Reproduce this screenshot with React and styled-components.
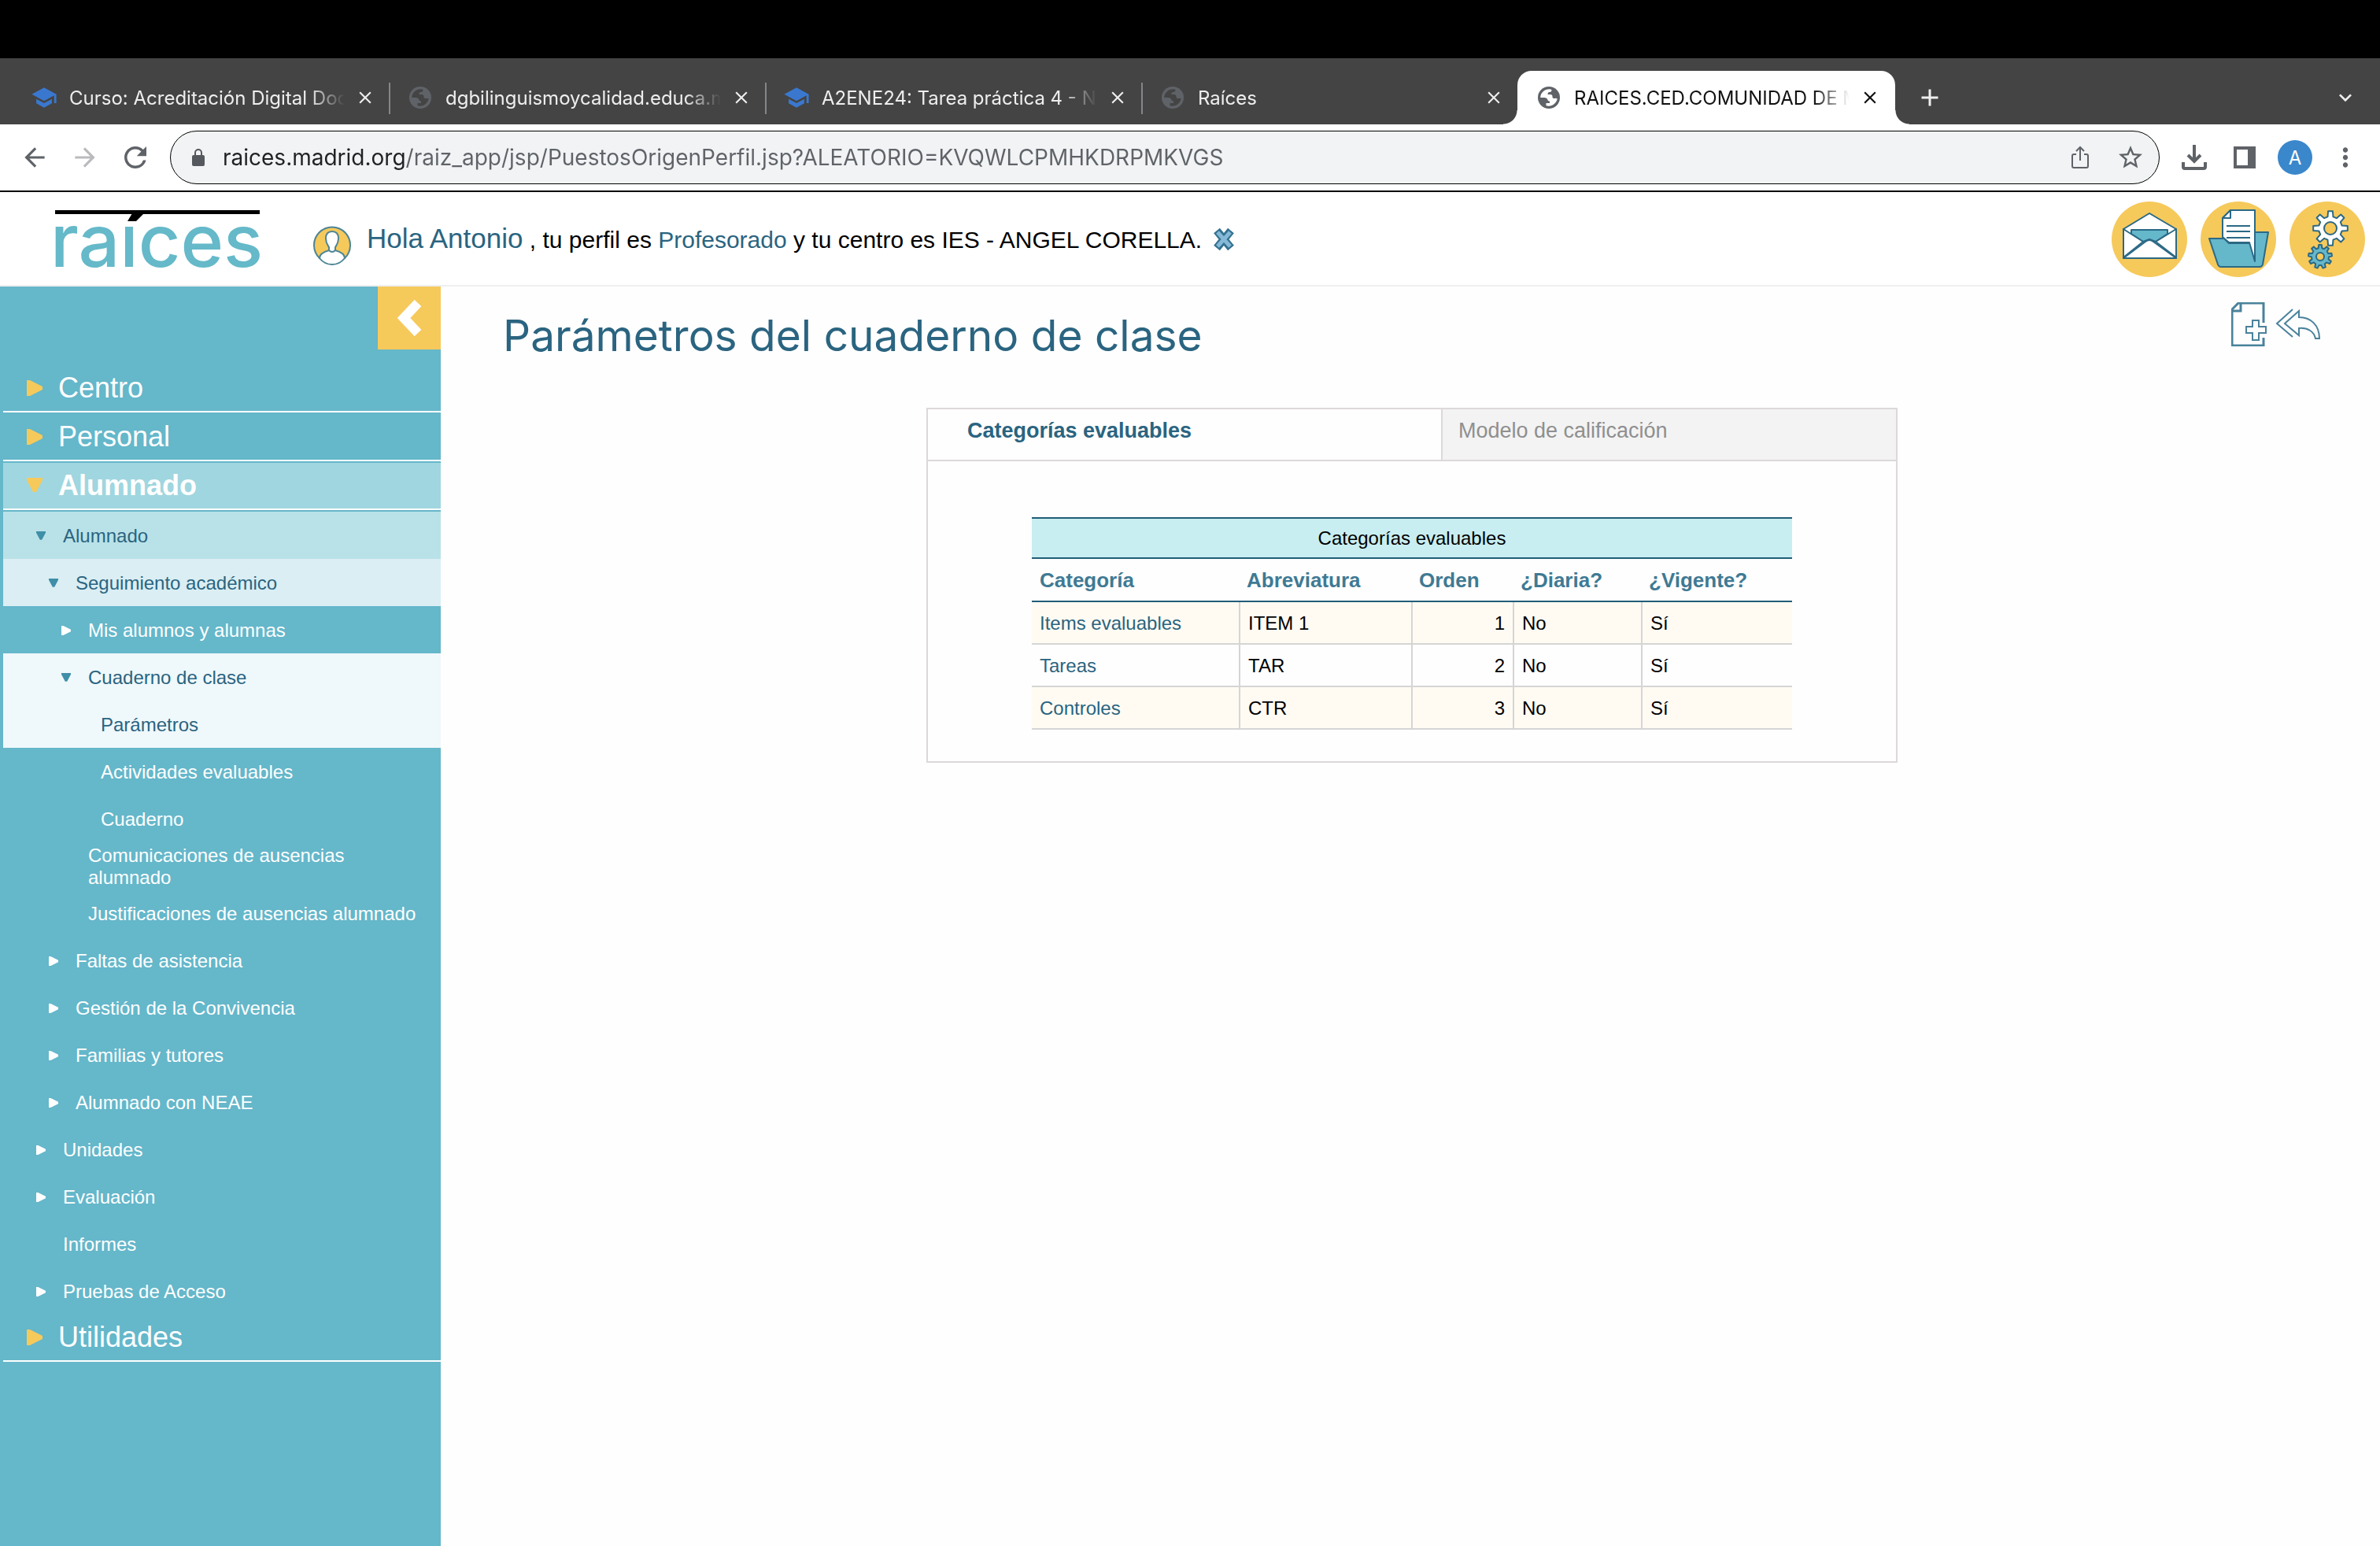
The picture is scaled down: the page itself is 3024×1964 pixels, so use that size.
import React, { useState } from 'react'
import styled, { createGlobalStyle, css } from 'styled-components'
import { MdSchool, MdClose, MdArrowBack, MdArrowForward, MdRefresh, MdStarBorder, MdAdd, MdExpandMore, MdMoreVert } from 'react-icons/md'

const tabs = [
    { title: 'Curso: Acreditación Digital Doc', icon: 'school' },
    { title: 'dgbilinguismoycalidad.educa.m', icon: 'globe' },
    { title: 'A2ENE24: Tarea práctica 4 - Ni', icon: 'school' },
    { title: 'Raíces', icon: 'globe' },
    { title: 'RAICES.CED.COMUNIDAD DE M', icon: 'globe', active: true },
]

const menu = [
    { label: 'Centro', level: 0, arrow: 'right' },
    { label: 'Personal', level: 0, arrow: 'right' },
    { label: 'Alumnado', level: 0, arrow: 'down', bg: '#a0d6df' },
    { label: 'Alumnado', level: 1, arrow: 'down', bg: '#b9e2e8' },
    { label: 'Seguimiento académico', level: 2, arrow: 'down', bg: '#daeef3' },
    { label: 'Mis alumnos y alumnas', level: 3, arrow: 'right' },
    { label: 'Cuaderno de clase', level: 3, arrow: 'down', bg: '#eff8fb' },
    { label: 'Parámetros', level: 4, bg: '#eff8fb' },
    { label: 'Actividades evaluables', level: 4 },
    { label: 'Cuaderno', level: 4 },
    { label: 'Comunicaciones de ausencias alumnado', level: 3 },
    { label: 'Justificaciones de ausencias alumnado', level: 3 },
    { label: 'Faltas de asistencia', level: 2, arrow: 'right' },
    { label: 'Gestión de la Convivencia', level: 2, arrow: 'right' },
    { label: 'Familias y tutores', level: 2, arrow: 'right' },
    { label: 'Alumnado con NEAE', level: 2, arrow: 'right' },
    { label: 'Unidades', level: 1, arrow: 'right' },
    { label: 'Evaluación', level: 1, arrow: 'right' },
    { label: 'Informes', level: 1 },
    { label: 'Pruebas de Acceso', level: 1, arrow: 'right' },
    { label: 'Utilidades', level: 0, arrow: 'right' },
]

const categorias = [
    { nombre: 'Items evaluables', abreviatura: 'ITEM 1', orden: 1, diaria: 'No', vigente: 'Sí' },
    { nombre: 'Tareas', abreviatura: 'TAR', orden: 2, diaria: 'No', vigente: 'Sí' },
    { nombre: 'Controles', abreviatura: 'CTR', orden: 3, diaria: 'No', vigente: 'Sí' },
]

/* outline of a cog wheel centred on cx, cy */
const cog = (cx, cy, outer, inner, teeth) => {
    const step = (Math.PI * 2) / teeth
    const points = []
    for (let i = 0; i < teeth; i++) {
        [[-0.3, inner], [-0.17, outer], [0.17, outer], [0.3, inner]].forEach(([turn, r]) => {
            const a = (i + turn) * step - Math.PI / 2
            points.push(`${(cx + r * Math.cos(a)).toFixed(1)},${(cy + r * Math.sin(a)).toFixed(1)}`)
        })
    }
    return points.join(' ')
}

const Globe = () => (
    <svg width="28" height="28" viewBox="0 0 28 28" aria-hidden="true">
        <circle cx="14" cy="14" r="14" fill="#5f6368" />
        <path fill="var(--tabColor)" d="M15.5 3.2C9 2.6 3.2 7.6 3.2 14H8c2.500 0 4 1 4.500 3 .3 1.300 1.300 1.500 2.500 1.500v2.500h-4.500v3.200c6.500 2 13-2.500 14.200-8.700-1.700-1.500-2.700-.5-4.200-.5-2 0-2-1-2-2.500s-1-2.500-2.500-2.500h-3.500c0-2 .5-3 2.500-3s2.500-1.500 2.500-3z" />
    </svg>
)

const Lock = () => (
    <svg width="16" height="22" viewBox="0 0 16 22" aria-hidden="true">
        <rect y="8" width="16" height="14" rx="2" fill="#55585d" />
        <path d="M4 9V5a4 4 0 0 1 8 0v4" fill="none" stroke="#55585d" strokeWidth="2" />
    </svg>
)

const Share = () => (
    <svg width="24" height="30" viewBox="0 0 24 30" fill="none" stroke="#5f6368" strokeWidth="2" aria-hidden="true">
        <path d="M7 11H4a2 2 0 0 0-2 2v13a2 2 0 0 0 2 2h16a2 2 0 0 0 2-2V13a2 2 0 0 0-2-2h-3M12 19V3M7 7l5-5 5 5" />
    </svg>
)

const Download = () => (
    <svg width="32" height="34" viewBox="0 0 32 34" fill="none" stroke="#5f6368" strokeWidth="4" aria-hidden="true">
        <path d="M16 1v20M8 14l8 8 8-8M2 23v6a2 2 0 0 0 2 2h24a2 2 0 0 0 2-2v-6" />
    </svg>
)

const SidePanel = () => (
    <svg width="28" height="28" viewBox="0 0 28 28" aria-hidden="true">
        <path fill="#5f6368" fillRule="evenodd" d="M0 0h28v28H0zM4 4v20h14V4z" />
    </svg>
)

const Arrow = ({ dir, level }) => {
    const size = level === 0 ? 20 : 12
    const fill = level === 0 ? '#f6c95b' : dir === 'down' ? '#3f8fa8' : '#fff'
    return (
        <svg width={size} height={size} viewBox="0 0 20 20" aria-hidden="true">
            <path fill={fill} d={dir === 'down' ? 'M0 0h20v3l-8 15H8L0 3z' : 'M0 0h4l16 8v4L4 20H0z'} />
        </svg>
    )
}

const Logo = () => (
    <svg width="264" height="76" viewBox="0 0 264 76" role="img" aria-label="raíces">
        <svg y="18" width="264" height="58">
            <LogoText x="-4" y="55">raíces</LogoText>
        </svg>
        <path d="M2 1h260v5H2z" />
        <path d="M100 5h15l-10 10H94z" />
    </svg>
)

const User = () => (
    <svg width="48" height="50" viewBox="0 0 48 50" fill="#fff" stroke="#4d8595" strokeWidth="2" aria-hidden="true">
        <path fill="#f6c95b" d="M8 41a23 23 0 1 1 32 0z" />
        <path d="M24 7c-6 0-8 4-8 9 0 6 2 8 4 11v4c-7 2-12 5-12 10 4 5 9 8 16 8s12-3 16-8c0-5-5-8-12-10v-4c2-3 4-5 4-11 0-5-2-9-8-9z" />
        <path fill="none" d="M20 31q4 4 8 0" />
    </svg>
)

const CrossIcon = () => (
    <svg width="28" height="30" viewBox="0 0 28 30" aria-hidden="true">
        <path d="M5 4l18 22M23 4L5 26" stroke="#34718f" strokeWidth="10" />
        <path d="M6 6l16 18M22 6L6 24" stroke="#86b9d8" strokeWidth="5" />
    </svg>
)

const MailIcon = () => (
    <svg width="96" height="96" viewBox="0 0 96 96" stroke="#2b6985" strokeWidth="2" strokeLinejoin="round" aria-hidden="true">
        <circle cx="48" cy="48" r="48" fill="#f6c95b" stroke="none" />
        <path fill="#fff" d="M15 35l33-20 34 20v37H15z" />
        <path fill="#65b7ca" d="M25 36h46v5L56 51l-8-3-8 3-15-10z" />
        <path fill="#fff" d="M15 35l25 16-25 20zM82 35L56 51l26 20z" />
        <path fill="#fff" d="M15 72l28-21q5-4 10 0l29 21z" />
    </svg>
)

const FolderIcon = () => (
    <svg width="96" height="96" viewBox="0 0 96 96" stroke="#2b6985" strokeWidth="2" strokeLinejoin="round" aria-hidden="true">
        <circle cx="48" cy="48" r="48" fill="#f6c95b" stroke="none" />
        <path fill="#65b7ca" d="M66 39h20l-7 41q-1 3-4 3H26q-3 0-4-3L11 47h19l6 6h30z" />
        <path fill="#fff" d="M38 11h31v65l-7-24H36l-8-7V21z" />
        <path fill="#fff" d="M38 11v10H28z" />
        <path d="M33 31h30M33 38h30M33 46h30" />
    </svg>
)

const GearsIcon = () => (
    <svg width="96" height="96" viewBox="0 0 96 96" stroke="#2b6985" strokeWidth="2" strokeLinejoin="round" aria-hidden="true">
        <circle cx="48" cy="48" r="48" fill="#f6c95b" stroke="none" />
        <polygon fill="#fff" points={cog(52, 34, 22, 15, 8)} />
        <circle cx="52" cy="34" r="8" fill="#f6c95b" />
        <polygon fill="#65b7ca" points={cog(39, 70, 15, 11, 9)} />
        <circle cx="39" cy="70" r="5" fill="#f6c95b" />
    </svg>
)

const NewDocIcon = () => (
    <svg width="46" height="56" viewBox="0 0 46 56" fill="none" stroke="#4a829b" strokeWidth="3" aria-hidden="true">
        <path d="M41 26V1H9L1 9v46h40V45M12 2v9H2" />
        <path d="M27 23h8v8h9v8h-9v9h-8v-9h-8v-8h8z" strokeWidth="2" />
    </svg>
)

const BackIcon = () => (
    <svg width="58" height="40" viewBox="0 0 58 40" fill="none" stroke="#4a829b" strokeWidth="2" aria-hidden="true">
        <path d="M22 1L2 19l20 17" />
        <path d="M30 3L12 19l18 15V25c11-1 19 4 21 13h5C56 21 45 11 30 11z" />
    </svg>
)

export default function App() {
    const [open, setOpen] = useState(true)

    return (
        <Page>
            <GlobalStyle />
            <Notch />
            <TabStrip>
                {tabs.map((tab, i) => (
                    <Tab key={tab.title} $active={tab.active} $line={i < 3}>
                        <TabIcon>{tab.icon === 'school' ? <MdSchool size={34} color="#3a78cf" /> : <Globe />}</TabIcon>
                        <TabTitle>{tab.title}</TabTitle>
                        <TabButton aria-label="Cerrar pestaña"><MdClose size={26} /></TabButton>
                    </Tab>
                ))}
                <NewTab aria-label="Nueva pestaña"><MdAdd size={36} /></NewTab>
                <TabMenu aria-label="Buscar pestañas"><MdExpandMore size={32} /></TabMenu>
            </TabStrip>

            <Toolbar>
                <NavButton aria-label="Atrás"><MdArrowBack size={38} /></NavButton>
                <NavButton aria-label="Adelante" $dim><MdArrowForward size={38} /></NavButton>
                <NavButton aria-label="Recargar"><MdRefresh size={42} /></NavButton>
                <AddressBar>
                    <Lock />
                    <Address aria-label="Dirección" defaultValue="raices.madrid.org/raiz_app/jsp/PuestosOrigenPerfil.jsp?ALEATORIO=KVQWLCPMHKDRPMKVGS" />
                    <NavButton aria-label="Compartir"><Share /></NavButton>
                    <NavButton aria-label="Favorito"><MdStarBorder size={36} /></NavButton>
                </AddressBar>
                <NavButton aria-label="Descargas"><Download /></NavButton>
                <NavButton aria-label="Panel lateral"><SidePanel /></NavButton>
                <Profile aria-label="Perfil A">A</Profile>
                <NavButton aria-label="Más"><MdMoreVert size={38} /></NavButton>
            </Toolbar>

            <Header>
                <Logo />
                <Greeting>
                    <UserBadge><User /></UserBadge>
                    <p>
                        <UserName href="#usuario">Hola Antonio</UserName> , tu perfil es <a href="#perfil">Profesorado</a> y tu centro es IES - ANGEL CORELLA.
                    </p>
                    <IconButton aria-label="Cerrar sesión"><CrossIcon /></IconButton>
                </Greeting>
                <Shortcuts>
                    <IconButton aria-label="Mensajes"><MailIcon /></IconButton>
                    <IconButton aria-label="Documentos"><FolderIcon /></IconButton>
                    <IconButton aria-label="Configuración"><GearsIcon /></IconButton>
                </Shortcuts>
            </Header>

            <Content>
                <Sidebar>
                    <Toggle aria-label="Ocultar menú" onClick={() => setOpen(!open)}>
                        <svg width="30" height="46" viewBox="0 0 30 46" fill="none" stroke="#fff" strokeWidth="12" aria-hidden="true">
                            <path d="M26 4L8 23l18 19" />
                        </svg>
                    </Toggle>
                    {open && (
                        <Menu>
                            {menu.map((item, i) => (
                                <li key={i}>
                                    <MenuLink href="#menu" $level={item.level} $bg={item.bg}>
                                        <MenuArrow $level={item.level}>
                                            {item.arrow && <Arrow dir={item.arrow} level={item.level} />}
                                        </MenuArrow>
                                        <span>{item.label}</span>
                                    </MenuLink>
                                </li>
                            ))}
                        </Menu>
                    )}
                </Sidebar>

                <Main>
                    <TitleRow>
                        <h1>Parámetros del cuaderno de clase</h1>
                        <Actions>
                            <IconButton aria-label="Nuevo"><NewDocIcon /></IconButton>
                            <IconButton aria-label="Volver"><BackIcon /></IconButton>
                        </Actions>
                    </TitleRow>

                    <Panel>
                        <PanelTabs role="tablist">
                            <PanelTab role="tab" aria-selected="true" $active>Categorías evaluables</PanelTab>
                            <PanelTab role="tab" aria-selected="false">Modelo de calificación</PanelTab>
                        </PanelTabs>
                        <Table>
                            <caption>Categorías evaluables</caption>
                            <colgroup>
                                <Col $w={263} />
                                <Col $w={219} />
                                <Col $w={129} />
                                <Col $w={163} />
                                <Col $w={192} />
                            </colgroup>
                            <thead>
                                <tr>
                                    <th>Categoría</th>
                                    <th>Abreviatura</th>
                                    <th>Orden</th>
                                    <th>¿Diaria?</th>
                                    <th>¿Vigente?</th>
                                </tr>
                            </thead>
                            <tbody>
                                {categorias.map(c => (
                                    <tr key={c.nombre}>
                                        <td><a href="#categoria">{c.nombre}</a></td>
                                        <td>{c.abreviatura}</td>
                                        <NumberCell>{c.orden}</NumberCell>
                                        <td>{c.diaria}</td>
                                        <td>{c.vigente}</td>
                                    </tr>
                                ))}
                            </tbody>
                        </Table>
                    </Panel>
                </Main>
            </Content>
        </Page>
    )
}

const GlobalStyle = createGlobalStyle`
* {
    box-sizing: border-box;
}
body {
    margin: 0;
    background: #fefefe;
    font-family: "Liberation Sans", Arial, sans-serif;
    color: #000;
}
h1, p, ul {
    margin: 0;
    padding: 0;
}
a {
    color: #2a6480;
    text-decoration: none;
}
button {
    border: 0;
    padding: 0;
    background: none;
    font: inherit;
    color: inherit;
    cursor: pointer;
}
svg {
    display: block;
    flex: none;
}
`

const Page = styled.div`
display: flex;
flex-direction: column;
min-height: 100vh;
`

const Notch = styled.div`
height: 74px;
background: #000;
`

const TabStrip = styled.div`
display: flex;
align-items: flex-end;
height: 84px;
padding-left: 18px;
padding-right: 28px;
background: #444;
color: #eee;
font-family: Inter, sans-serif;
font-size: 24px;
`

const Tab = styled.div`
--tabColor: #444;
position: relative;
display: flex;
align-items: center;
width: 478px;
height: 68px;
padding: 0 16px 0 22px;

${p => p.$line && css`
    &::after {
        content: "";
        position: absolute;
        right: 0;
        top: 15px;
        width: 2px;
        height: 40px;
        background: #85868a;
    }
`}

${p => p.$active && css`
    --tabColor: #fff;
    width: 480px;
    margin-left: -2px;
    padding-left: 24px;
    background: #fff;
    color: #111;
    border-radius: 18px 18px 0 0;

    &::before,
    &::after {
        content: "";
        position: absolute;
        bottom: 0;
        width: 18px;
        height: 18px;
    }
    &::before {
        right: 100%;
        background: radial-gradient(circle at 0 0, #444 17px, #fff 18px);
    }
    &::after {
        left: 100%;
        background: radial-gradient(circle at 100% 0, #444 17px, #fff 18px);
    }
`}
`

const TabIcon = styled.span`
display: flex;
justify-content: center;
width: 32px;
margin-right: 16px;
`

const TabTitle = styled.span`
flex: 1;
overflow: hidden;
white-space: nowrap;
mask-image: linear-gradient(90deg, #000 87%, transparent 100%);
`

const TabButton = styled.button`
display: flex;
justify-content: center;
width: 32px;
margin-left: 10px;
`

const NewTab = styled.button`
display: flex;
align-items: center;
height: 68px;
margin-left: 26px;
`

const TabMenu = styled(NewTab)`
margin-left: auto;
`

const Toolbar = styled.div`
display: flex;
align-items: center;
height: 86px;
padding: 0 12px;
background: #fff;
border-bottom: 2px solid #000;
`

const NavButton = styled.button`
display: flex;
align-items: center;
justify-content: center;
width: 64px;
height: 64px;
color: ${p => p.$dim ? '#b9bbbe' : '#5f6368'};
`

const AddressBar = styled.div`
display: flex;
flex: 1;
align-items: center;
height: 68px;
margin: 0 12px;
padding: 0 4px 0 27px;
background: #f1f3f4;
border: 1px solid #000;
border-radius: 34px;
`

const Address = styled.input`
flex: 1;
min-width: 0;
margin-left: 23px;
padding: 0;
border: 0;
outline: 0;
background: linear-gradient(90deg, #202124 231px, #5f6368 231px);
background-clip: text;
color: transparent;
font-family: Inter, sans-serif;
font-size: 28px;
line-height: 40px;
`

const Profile = styled.button`
width: 44px;
height: 44px;
margin: 0 10px;
border-radius: 50%;
background: #3a87cb;
color: #fff;
font-family: Inter, sans-serif;
font-size: 24px;
`

const Header = styled.header`
display: flex;
align-items: center;
height: 120px;
padding: 2px 19px 0 68px;
background: #fff;
border-bottom: 2px solid #efefef;
`

const LogoText = styled.text`
font-family: Inter, sans-serif;
font-size: 93px;
font-weight: 500;
fill: #65b9c9;
`

const Greeting = styled.div`
display: flex;
align-items: center;
margin-left: 66px;
font-size: 30px;
line-height: 40px;

p {
    margin: 0 14px 0 20px;
}
`

const UserBadge = styled.span`
padding-top: 16px;
`

const UserName = styled.a`
font-size: 35px;
`

const IconButton = styled.button`
display: flex;
`

const Shortcuts = styled.nav`
display: flex;
gap: 17px;
margin-left: auto;
`

const Content = styled.div`
display: flex;
flex: 1;
`

const Sidebar = styled.aside`
display: flex;
flex-direction: column;
width: 560px;
padding-left: 4px;
background: #65b7ca;
`

const Toggle = styled.button`
display: flex;
align-items: center;
align-self: flex-end;
width: 80px;
height: 80px;
margin-bottom: 20px;
padding-left: 25px;
background: #f6c95b;
`

const Menu = styled.ul`
list-style: none;
`

const MenuLink = styled.a`
display: flex;
align-items: center;
height: 60px;
padding: 1px 20px 0 ${p => 26 + p.$level * 16}px;
background: ${p => p.$bg || 'transparent'};
color: ${p => p.$bg ? '#2a6480' : '#fff'};
font-size: 24px;
line-height: 28px;

${p => p.$level === 0 && css`
    padding: 0 20px 0 30px;
    margin-bottom: 2px;
    border-bottom: 2px solid #fff;
    color: #fff;
    font-size: 36px;
    font-weight: ${p.$bg ? 'bold' : 'normal'};
    line-height: 40px;
`}
`

const MenuArrow = styled.span`
flex: none;
width: ${p => p.$level === 0 ? 40 : 34}px;
`

const Main = styled.main`
flex: 1;
padding: 20px 75px 20px 79px;
`

const TitleRow = styled.div`
display: flex;
align-items: flex-start;
justify-content: space-between;
margin-bottom: 60px;

h1 {
    padding-top: 10px;
    color: #2a6480;
    font-family: Inter, sans-serif;
    font-size: 55px;
    font-weight: 400;
    line-height: 64px;
}
`

const Actions = styled.div`
display: flex;
align-items: center;
gap: 10px;
`

const Panel = styled.section`
width: 1234px;
max-width: 100%;
margin: 0 auto;
padding-bottom: 40px;
border: 2px solid #ddd8da;
`

const PanelTabs = styled.div`
display: flex;
border-bottom: 2px solid #ddd8da;
`

const PanelTab = styled.button`
flex: 1;
height: 64px;
padding: 0 20px 10px;
border-left: 2px solid #ddd8da;
background: #f3f3f3;
color: #8f8f8f;
font-size: 27px;
text-align: left;

${p => p.$active && css`
    flex: none;
    width: 53%;
    padding-left: 50px;
    border-left: 0;
    background: transparent;
    color: #2a6480;
    font-weight: bold;
`}
`

const Table = styled.table`
width: 966px;
margin: 71px auto 0;
table-layout: fixed;
border-spacing: 0;
font-size: 24px;
line-height: 28px;

caption {
    padding: 11px 0 10px;
    border-top: 2px solid #215d78;
    border-bottom: 2px solid #215d78;
    background: #c9eef1;
}
th {
    height: 55px;
    padding: 0 0 0 10px;
    border-bottom: 2px solid #215d78;
    color: #3f7a94;
    font-size: 26px;
    text-align: left;
}
td {
    height: 54px;
    padding: 1px 10px 0;
    border-bottom: 2px solid #d5d5d5;
}
td + td {
    border-left: 2px solid #d5d5d5;
}
tbody tr:nth-child(odd) {
    background: #fffbf3;
}
`

const Col = styled.col`
width: ${p => p.$w}px;
`

const NumberCell = styled.td`
text-align: right;
`
